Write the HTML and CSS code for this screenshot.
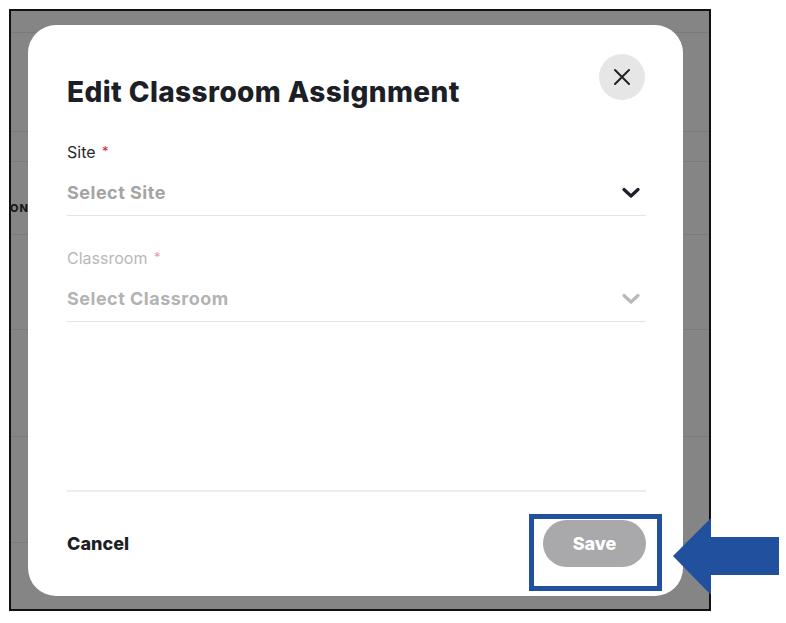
FILE: index.html
```html
<!DOCTYPE html>
<html lang="en">
<head>
    <meta charset="UTF-8">
    <meta name="viewport" content="width=device-width, initial-scale=1.0">
    <title>Edit Classroom Assignment</title>
    <link rel="stylesheet" href="styles.css">
</head>
<body>
    <div class="page">
        <div class="screen">
            <!-- tabla de fondo, tapada por el overlay -->
            <div class="bg-table">
                <div class="bg-row r1"></div>
                <div class="bg-row r2"></div>
                <div class="bg-row r3"></div>
                <div class="bg-row r4"><span class="bg-head">ON</span></div>
                <div class="bg-row r5"></div>
                <div class="bg-row r6"></div>
                <div class="bg-row r7"></div>
            </div>

            <div class="modal">
                <div class="modal-header">
                    <h1>Edit Classroom Assignment</h1>
                    <button class="close-btn" aria-label="Close">
                        <svg width="18" height="18" viewBox="0 0 18 18">
                            <path d="M2 2 L16 16 M16 2 L2 16" stroke="#222" stroke-width="2" stroke-linecap="round" fill="none"/>
                        </svg>
                    </button>
                </div>

                <div class="field">
                    <label>Site <span class="req">*</span></label>
                    <div class="select">
                        <span>Select Site</span>
                        <svg width="18" height="12" viewBox="0 0 18 12">
                            <path d="M2 2.5 L9 9 L16 2.5" stroke="#1d1f26" stroke-width="3.2" stroke-linecap="round" stroke-linejoin="round" fill="none"/>
                        </svg>
                    </div>
                </div>

                <div class="field disabled">
                    <label>Classroom <span class="req">*</span></label>
                    <div class="select">
                        <span>Select Classroom</span>
                        <svg width="18" height="12" viewBox="0 0 18 12">
                            <path d="M2 2.5 L9 9 L16 2.5" stroke="#b9b9b9" stroke-width="3.2" stroke-linecap="round" stroke-linejoin="round" fill="none"/>
                        </svg>
                    </div>
                </div>

                <div class="spacer"></div>

                <div class="modal-footer">
                    <button class="cancel-btn">Cancel</button>
                    <button class="save-btn" disabled>Save</button>
                </div>
            </div>
        </div>

        <!-- marca azul sobre el boton Save -->
        <div class="highlight"></div>
        <svg class="arrow" width="106" height="78" viewBox="0 0 106 78">
            <polygon points="0,38 38,0 38,19 106,19 106,57 38,57 38,77" fill="#21509e"/>
        </svg>
    </div>
</body>
</html>
```

FILE: styles.css
```css
body {
    font-family: Inter, "Noto Sans", Arial, sans-serif;
    background-color: white;
    margin: 0;
    padding: 0;
}

.page {
    position: relative;
    width: 786px;
    height: 623px;
}

.screen {
    position: relative;
    margin: 9px 0 0 9px;
    width: 698px;
    height: 598px;
    border: 2px solid #111;
    background-color: #858585;
    overflow: hidden;
}

/* Tabla de fondo */
.bg-row {
    border-bottom: 1px solid #7a7a7a;
    display: flex;
    align-items: flex-end;
}

.r1 { height: 21px; }
.r2 { height: 98px; }
.r3 { height: 29px; }
.r4 { height: 72px; }
.r5 { height: 94px; }
.r6 { height: 106px; }
.r7 { height: 105px; }

.bg-head {
    font-size: 11px;
    font-weight: 800;
    color: #1a1a1a;
    letter-spacing: 1px;
    margin: 0 0 19px -1px;
}

/* Modal */
.modal {
    position: absolute;
    left: 17px;
    top: 14px;
    width: 655px;
    height: 571px;
    box-sizing: border-box;
    padding: 29px 37px 0 39px;
    background-color: white;
    border-radius: 28px;
    display: flex;
    flex-direction: column;
}

.modal-header {
    display: flex;
    justify-content: space-between;
    align-items: flex-start;
    margin-bottom: 36px;
}

.modal-header h1 {
    margin: 24px 0 0 0;
    font-size: 28px;
    font-weight: 800;
    line-height: 28px;
    letter-spacing: 0.4px;
    color: #1d1f26;
}

.close-btn {
    width: 46px;
    height: 46px;
    border: none;
    border-radius: 50%;
    background-color: #e6e6e6;
    margin-right: 1px;
    display: flex;
    align-items: center;
    justify-content: center;
    padding: 0;
    cursor: pointer;
}

.field {
    margin-bottom: 32px;
}

.field label {
    display: block;
    height: 20px;
    font-size: 16px;
    line-height: 20px;
    color: #2a2a2a;
}

.field .req {
    color: #d0262f;
    font-size: 13px;
    line-height: 0;
    vertical-align: 2px;
    margin-left: 2px;
}

.select {
    display: flex;
    justify-content: space-between;
    align-items: center;
    height: 45px;
    padding: 8px 6px 0 0;
    border-bottom: 1px solid #e4e4e4;
    font-size: 18px;
    font-weight: 700;
    letter-spacing: 0.5px;
    color: #a4a4a4;
}

.field.disabled label {
    color: #b8b8b8;
}

.field.disabled .req {
    color: #ec9a9e;
}

.field.disabled .select {
    color: #b3b3b3;
}

.spacer {
    flex: 1;
}

.modal-footer {
    display: flex;
    justify-content: space-between;
    align-items: center;
    border-top: 2px solid #ececec;
    padding: 28px 0 29px 0;
}

.cancel-btn {
    background: none;
    border: none;
    padding: 0;
    font-family: inherit;
    font-size: 18px;
    font-weight: 800;
    color: #1d1f26;
    cursor: pointer;
}

.save-btn {
    width: 103px;
    height: 47px;
    border: none;
    border-radius: 24px;
    background-color: #a9a9ab;
    color: white;
    font-family: inherit;
    font-size: 18px;
    font-weight: 800;
}

/* Anotacion */
.highlight {
    position: absolute;
    left: 529px;
    top: 505px;
    width: 123px;
    height: 67px;
    border: 5px solid #21509e;
}

.arrow {
    position: absolute;
    left: 673px;
    top: 509px;
}
```
